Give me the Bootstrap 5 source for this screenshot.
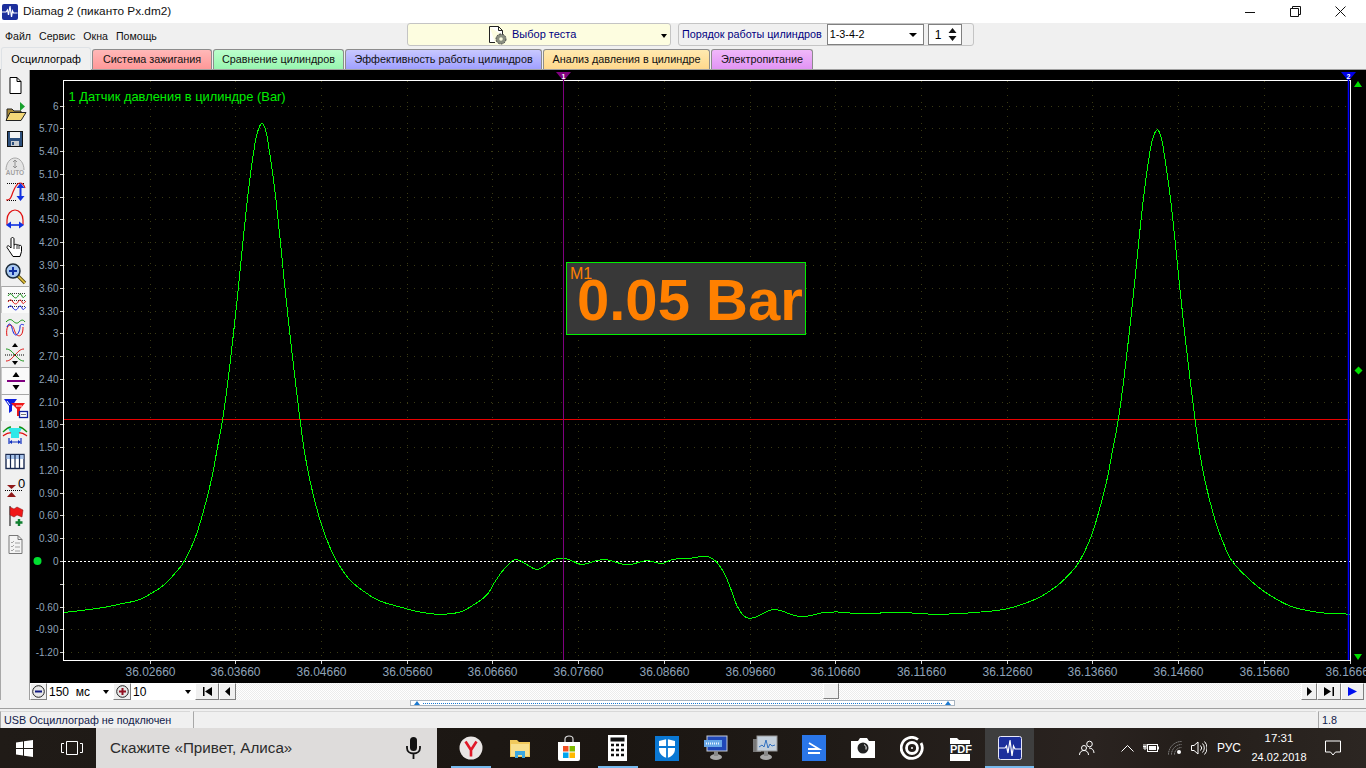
<!DOCTYPE html>
<html lang="ru">

<head>
    <meta charset="UTF-8">
    <title>Diamag 2</title>
    <link href="https://cdn.jsdelivr.net/npm/bootstrap@5.3.0/dist/css/bootstrap.min.css" rel="stylesheet">
    <style>
        html, body { height: 768px; overflow: hidden; }
        body { background: #f0f0f0; font-family: "Liberation Sans", Arial, sans-serif; font-size: 11px; color: #000; line-height: 1; }
        svg { display: block; }

        .win-title { height: 23px; background: #fff; font-size: 11.8px; color: #111; }
        .win-title .app-ico { margin: 0 5px 0 2px; }
        .win-btn { width: 45.5px; height: 23px; }
        .win-btns { margin-right: 2.5px; }

        .top-row { height: 24px; }
        .menu-area { width: 407px; padding-left: 5px; gap: 8px; font-size: 10.6px; color: #111; padding-top: 2px; }
        .test-pick { width: 264px; height: 23px; background: #fdfde0; border: 1px solid #c4c4c4; border-radius: 3px; color: #000080; position: relative; }
        .test-pick .doc-ico { margin-left: 80px; margin-right: 3px; }
        .pick-caret { width: 0; height: 0; border-left: 3px solid transparent; border-right: 3px solid transparent; border-top: 4px solid #000; }
        .test-pick .pick-caret { position: absolute; right: 3px; top: 10px; }
        .cyl-group { width: 296px; height: 23px; margin-left: 7px; border: 1px solid #c4c4c4; border-radius: 3px; color: #000080; padding-left: 3px; font-size: 10.8px; }
        .cyl-combo { width: 97px; height: 21px; margin-left: 5px; background: #fff; border: 1px solid #808080; color: #000; padding: 0 6px 0 2px; }
        .cyl-combo .pick-caret { border-left-width: 4px; border-right-width: 4px; }
        .cyl-spin { width: 34px; height: 21px; margin-left: 4px; background: #fff; border: 1px solid #808080; color: #000; padding: 0 4px 0 6px; font-size: 12px; }

        .tab-row.nav-tabs { height: 22px; border: 0; padding-left: 1px; gap: 1px; align-items: flex-end; flex-wrap: nowrap; }
        .tab-row .nav-link { height: 20px; margin: 0; padding: 0; display: flex; align-items: center; justify-content: center; color: #111; font-size: 10.8px; border: 1px solid #8c8c8c; border-bottom: 0; border-radius: 3px 3px 0 0; }
        .tab-row .nav-link.active { height: 23px; width: 90px; margin-bottom: -1px; background: #f0f0f0; color: #000; position: relative; z-index: 2; }
        .tab-row .tab-ign { width: 120px; background: linear-gradient(#ffb8b8, #ff9898); }
        .tab-row .tab-cmp { width: 131px; background: linear-gradient(#bcffcc, #98f5b0); }
        .tab-row .tab-eff { width: 197px; background: linear-gradient(#c8c8ff, #a0a0ff); }
        .tab-row .tab-prs { width: 167px; background: linear-gradient(#ffeab0, #ffd88c); }
        .tab-row .tab-pwr { width: 102px; background: linear-gradient(#f0b8fa, #e294f4); }

        .app-main { height: 631px; border-top: 1px solid #a0a0a0; border-left: 1px solid #a8a8a8; }
        .tool-col { width: 29px; border-right: 1px solid #a0a0a0; }
        .tool-btn { width: 28px; height: 27px; }
        .tool-btn.on { background: #fafafa; border-top: 1px solid #a8a8a8; border-left: 1px solid #c8c8c8; }
        .scope { width: 1336px; height: 613px; background: #000; }
        .scope-axis { font-family: "Liberation Sans", Arial, sans-serif; fill: #8fa3b8; }

        .ctrl-row { height: 17px; font-size: 12px; }
        .raised { height: 17px; background: #f0f0f0; border: 1px solid; border-color: #fff #808080 #808080 #fff; flex: none; display: flex; align-items: center; justify-content: center; }
        .ctrl-pick { background: #fff; height: 17px; padding: 0 4px 0 2px; flex: none; }
        .scroll-track { height: 17px; background: repeating-conic-gradient(#ececec 0% 25%, #fff 0% 50%) 0 0 / 2px 2px; position: relative; }
        .scroll-thumb { position: absolute; left: 587px; top: 0; width: 16px; height: 16px; background: #f0f0f0; border: 1px solid; border-color: #fff #808080 #808080 #fff; }

        .range-row { height: 8px; }
        .range-bar { width: 545px; height: 6px; margin: 0 0 0 410px; background: #fff; border: 1px solid #a8b4c0; }
        .range-dots { border-top: 1px dotted #1a78d0; height: 0; }
        .range-tri { width: 0; height: 0; border-left: 3px solid transparent; border-right: 3px solid transparent; border-bottom: 4px solid #1a78d0; margin: 0 3px; }

        .status-line { height: 20px; border-top: 1px solid #a0a0a0; padding-top: 2px; font-size: 10.8px; color: #10204a; }
        .stat-cell { height: 17px; border-left: 1px solid #a8a8a8; border-top: 1px solid #d8d8d8; padding: 3px 0 0 3px; }

        .task-bar { height: 40px; color: #fff; background: linear-gradient(90deg, #201b17 0, #1b1612 45%, #1f1a16 60%, #2a2320 80%, #241e1a 87%, #2c2622 100%); }
        .task-sys { width: 48px; height: 40px; }
        .task-search { width: 341px; height: 40px; background: #dedcdb; color: #2c2c2c; font-size: 15.2px; padding: 0 15px 0 14px; margin-right: 9px; }
        .task-app { width: 49px; height: 40px; position: relative; }
        .task-app.run::after { content: ""; position: absolute; left: 5px; right: 4px; bottom: 0; height: 2px; background: #76b9ed; }
        .task-app.cur { background: #3e3e3e; }
        .task-app.cur::after { content: ""; position: absolute; left: 0; right: 0; bottom: 0; height: 2px; background: #76b9ed; }
        .tray-ico { width: 24px; height: 40px; }
        .tray-lang { width: 36px; font-size: 12px; }
        .tray-clock { width: 64px; font-size: 11px; gap: 7px; }
        .tray-clock span:first-child { font-size: 11.5px; }
        .tray-note { width: 44px; height: 40px; margin-right: 11px; }
    </style>
</head>

<body>
    <div class="win-title d-flex align-items-center">
        <svg class="app-ico" width="16" height="16" viewBox="0 0 16 16"><rect width="16" height="16" rx="2" fill="#1c2f9c"/><path d="M0 8h4l1.500-2 1 5 1.500-9 1.500 11 1-6 1 2h4" fill="none" stroke="#fff" stroke-width="1.200"/></svg>
        <span>Diamag 2 (пиканто Px.dm2)</span>
        <div class="ms-auto d-flex win-btns">
            <div class="win-btn d-flex align-items-center justify-content-center"><svg width="10" height="10"><path d="M0 5.500h10" stroke="#111"/></svg></div>
            <div class="win-btn d-flex align-items-center justify-content-center"><svg width="11" height="11" viewBox="0 0 11 11"><path d="M.5 2.500h8v8h-8zM2.500 2.500v-2h8v8h-2" fill="none" stroke="#111"/></svg></div>
            <div class="win-btn d-flex align-items-center justify-content-center"><svg width="11" height="11" viewBox="0 0 11 11"><path d="M.5.500l10 10M10.500.500l-10 10" stroke="#111"/></svg></div>
        </div>
    </div>

    <div class="top-row d-flex">
        <div class="menu-area d-flex align-items-center">
            <span>Файл</span><span>Сервис</span><span>Окна</span><span>Помощь</span>
        </div>
        <div class="test-pick d-flex align-items-center">
            <svg class="doc-ico" width="21" height="20" viewBox="0 0 21 20">
                <path d="M1.500 1.500h9l4 4v5M7 17.500H1.500v-16M10.500 1.500v4h4" fill="#fff" stroke="#222"/>
                <circle cx="13" cy="14" r="5" fill="#8a8f80" stroke="#444" stroke-dasharray="2 1"/><circle cx="13" cy="14" r="1.800" fill="#fdfde0"/>
            </svg>
            <span>Выбор теста</span>
            <span class="pick-caret"></span>
        </div>
        <div class="cyl-group d-flex align-items-center">
            <span>Порядок работы цилиндров</span>
            <div class="cyl-combo d-flex align-items-center justify-content-between"><span>1-3-4-2</span><span class="pick-caret"></span></div>
            <div class="cyl-spin d-flex align-items-center justify-content-between">
                <span>1</span>
                <svg width="9" height="15" viewBox="0 0 9 15"><path d="M4.500 1l4 5h-8zM4.500 14l4-5h-8z" fill="#111"/></svg>
            </div>
        </div>
    </div>

    <ul class="nav nav-tabs tab-row">
        <li class="nav-item"><a class="nav-link active" href="#">Осциллограф</a></li>
        <li class="nav-item"><a class="nav-link tab-ign" href="#">Система зажигания</a></li>
        <li class="nav-item"><a class="nav-link tab-cmp" href="#">Сравнение цилиндров</a></li>
        <li class="nav-item"><a class="nav-link tab-eff" href="#">Эффективность работы цилиндров</a></li>
        <li class="nav-item"><a class="nav-link tab-prs" href="#">Анализ давления в цилиндре</a></li>
        <li class="nav-item"><a class="nav-link tab-pwr" href="#">Электропитание</a></li>
    </ul>

    <div class="app-main d-flex">
        <div class="tool-col d-flex flex-column">
            <div class="tool-btn d-flex align-items-center justify-content-center"><svg width="24" height="24" viewBox="0 0 24 24"><path d="M7 5.500h7l4 4v12H7zM14 5.500v4h4" fill="#fff" stroke="#000"/></svg></div>
            <div class="tool-btn d-flex align-items-center justify-content-center"><svg width="24" height="24" viewBox="0 0 24 24"><path d="M17 3l5 4.500-5 4.500z" fill="#16a02c"/><path d="M4 21V10h5l2 2h7v9z" fill="#a88a38" stroke="#222"/><path d="M3 21.500l4-8h16l-5 8z" fill="#f4d878" stroke="#222"/></svg></div>
            <div class="tool-btn d-flex align-items-center justify-content-center"><svg width="24" height="24" viewBox="0 0 24 24"><rect x="4.500" y="5.500" width="15" height="15" fill="#2c4f7c" stroke="#111"/><rect x="7" y="6" width="10" height="6" fill="#f4f4f4"/><rect x="8" y="15" width="8" height="5" fill="#c8ccd0"/><rect x="9" y="16" width="2" height="3" fill="#2c4f7c"/></svg></div>
            <div class="tool-btn d-flex align-items-center justify-content-center"><svg width="24" height="24" viewBox="0 0 24 24"><path d="M3 17c0-7 4-12 9-12s9 5 9 12" fill="#e4e4e4" stroke="#a8a8a8"/><path d="M12 7v8M10 9l2-2 2 2M10 13l2 2 2-2" fill="none" stroke="#909090"/><text x="12" y="22" font-size="6.500" font-weight="700" text-anchor="middle" fill="#a0a0a0" font-family="Liberation Sans">AUTO</text></svg></div>
            <div class="tool-btn d-flex align-items-center justify-content-center"><svg width="24" height="24" viewBox="0 0 24 24"><path d="M4 3.500h18M4 20.500h10" stroke="#000" stroke-dasharray="1 1"/><path d="M3 20c5 0 5-3 7-8s4-9 7-9 4 2 5 5" fill="none" stroke="#e01010" stroke-width="1.200"/><path d="M17.500 6v12" stroke="#1030e0" stroke-width="2"/><path d="M17.500 3l4 5h-8zM17.500 21l4-5h-8z" fill="#1030e0"/></svg></div>
            <div class="tool-btn d-flex align-items-center justify-content-center"><svg width="24" height="24" viewBox="0 0 24 24"><path d="M4 18v-5c0-6 4-10 8-10s8 4 8 10v5" fill="none" stroke="#e01010" stroke-width="1.200"/><path d="M6 18h12" stroke="#1030e0" stroke-width="1.600"/><path d="M3 18l5-3.500v7zM21 18l-5-3.500v7z" fill="#1030e0"/></svg></div>
            <div class="tool-btn d-flex align-items-center justify-content-center"><svg width="24" height="24" viewBox="0 0 24 24"><path d="M8 14V5c0-2 3-2 3 0v6l1-.5c1-.5 2 0 2 .5 1-.5 2 0 2 .5 1-.5 2.500 0 2.500 1v5l-1.500 5H10l-4-6-2-3c-.5-1.500 1.500-2.500 2.500-1z" fill="#fff" stroke="#000"/><path d="M11 11v4M14 11v4M16 11.500v3.500" stroke="#000" stroke-width=".8"/></svg></div>
            <div class="tool-btn d-flex align-items-center justify-content-center"><svg width="24" height="24" viewBox="0 0 24 24"><path d="M14 14l8 8" stroke="#5a4a10" stroke-width="3.400"/><path d="M15 15l7 7" stroke="#e8c840" stroke-width="1.600"/><circle cx="10" cy="10" r="7" fill="#a8c8f0" stroke="#1a2a3a" stroke-width="1.500"/><path d="M6 10h8M10 6v8" stroke="#1030a0" stroke-width="2"/></svg></div>
            <div class="tool-btn on d-flex align-items-center justify-content-center"><svg width="24" height="24" viewBox="0 0 24 24"><path d="M4 5.500h18M4 12.500h18M4 18.500h18" stroke="#000" stroke-dasharray="1 1" stroke-width=".8"/><path d="M4 8c2-3 3-3 5 0s4 2 5 0 3-3 4 0 2 1 4-1" fill="none" stroke="#109010"/><path d="M4 14c2-3 3-3 5 0s4 2 5 0 3-3 4 0 2 1 4-1" fill="none" stroke="#e01010"/><path d="M4 20c2-3 3-3 5 0s4 2 5 0 3-3 4 0 2 1 4-1" fill="none" stroke="#1020e0"/></svg></div>
            <div class="tool-btn d-flex align-items-center justify-content-center"><svg width="24" height="24" viewBox="0 0 24 24"><path d="M3 7c3-3 5-3 7-1s4 3 6 1 4-3 6 0" fill="none" stroke="#109010"/><path d="M4 21c-1-5 0-11 3-11s4 4 5 7 4 5 6 3 2-6 2-8" fill="none" stroke="#e01010"/><path d="M4 12c2-5 4-3 5 1s2 7 4 7 4-5 4-8 2-3 4-2" fill="none" stroke="#1020e0"/></svg></div>
            <div class="tool-btn d-flex align-items-center justify-content-center"><svg width="24" height="24" viewBox="0 0 24 24"><path d="M12 1l3 4H9z" fill="#000"/><path d="M3 7c4 0 6 3 9 6s5 6 9 6" fill="none" stroke="#109010"/><path d="M3 19c4 0 6-3 9-6s5-6 9-6" fill="none" stroke="#e01010"/><path d="M2 13h20" stroke="#000" stroke-dasharray="1 1"/><path d="M12 23l3-4H9z" fill="#000"/></svg></div>
            <div class="tool-btn on d-flex align-items-center justify-content-center"><svg width="24" height="24" viewBox="0 0 24 24"><path d="M12 3l3.500 5h-7zM12 21l3.500-5h-7z" fill="#000"/><path d="M3 12h18" stroke="#800080" stroke-width="2"/></svg></div>
            <div class="tool-btn on d-flex align-items-center justify-content-center"><svg width="26" height="24" viewBox="0 0 26 24"><path d="M1 3h13l-5 7v5l-3 2v-7z" fill="#1020e0"/><path d="M8 7h14l-5 6v7h-3v-7z" fill="#f01818"/><path d="M4 5l3 4M13 10h6" stroke="#fff"/><rect x="16.500" y="15.500" width="8" height="6" fill="#fff" stroke="#1020a0" stroke-width="1.300"/><path d="M18 18.500h5" stroke="#777"/></svg></div>
            <div class="tool-btn d-flex align-items-center justify-content-center"><svg width="26" height="24" viewBox="0 0 26 24"><path d="M6 5h14l-3 6v4H9v-4z" fill="#30e8e8"/><path d="M1 9c3-3 5-5 8-5M25 9c-3-3-5-5-8-5" fill="none" stroke="#109010" stroke-width="1.300"/><path d="M1 13c3-2 5-4 8-3M25 13c-3-2-5-4-8-3" fill="none" stroke="#e01010" stroke-width="1.300"/><path d="M7 15v6M19 15v6M9 19h8" stroke="#1030c0" stroke-width="1.200"/><path d="M7 19l3-2v4zM19 19l-3-2v4z" fill="#1030c0"/></svg></div>
            <div class="tool-btn d-flex align-items-center justify-content-center"><svg width="24" height="24" viewBox="0 0 24 24"><rect x="3" y="4.500" width="18" height="14" fill="#fff" stroke="#1a2a50" stroke-width="1.400"/><rect x="3.500" y="5" width="17" height="4" fill="#a8c4ec"/><path d="M7.500 5v14M12 5v14M16.500 5v14" stroke="#1a2a50" stroke-width="1.200"/></svg></div>
            <div class="tool-btn d-flex align-items-center justify-content-center"><svg width="24" height="24" viewBox="0 0 24 24"><path d="M4 8h9l-4.500 4zM4 20h9l-4.500-5z" fill="#901818"/><path d="M2 13.500h17" stroke="#000" stroke-dasharray="1 1"/><text x="18.500" y="11" font-size="13" text-anchor="middle" fill="#000" font-family="Liberation Sans">0</text></svg></div>
            <div class="tool-btn d-flex align-items-center justify-content-center"><svg width="24" height="24" viewBox="0 0 24 24"><path d="M7 2v20" stroke="#000"/><path d="M7 3l4 2 3-2 6 3-1 7-5-2-3 2-4-2z" fill="#f01818" stroke="#801010" stroke-width=".5"/><path d="M16 15v7M12.500 18.500h7" stroke="#108030" stroke-width="2.400"/></svg></div>
            <div class="tool-btn d-flex align-items-center justify-content-center"><svg width="24" height="24" viewBox="0 0 24 24"><path d="M6 4.500h9l4 4v14H6z" fill="#f4f4f4" stroke="#787878"/><path d="M15 4.500v4h4" fill="none" stroke="#787878"/><path d="M8 11l1 1 2-2M8 15l1 1 2-2M8 19l1 1 2-2M12 12h5M12 16h5M12 20h5" fill="none" stroke="#909090" stroke-width=".8"/></svg></div>
        </div>

        <div class="flex-grow-1 d-flex flex-column">
            <div class="scope">
                <svg id="scope_svg" width="1336" height="613" viewBox="30 70 1336 613">
                    <g id="scope_grid"></g>
                    <rect x="63.500" y="80.500" width="1287" height="580" fill="none" stroke="#fff"/>
                    <path d="M64 561.500h1286" stroke="#fff" stroke-dasharray="2 2"/>
                    <path d="M64 419.500h1286" stroke="#e80000"/>
                    <polyline id="scope_trace" fill="none" stroke="#00ff00" stroke-width="1" shape-rendering="crispEdges"/>
                    <path d="M563.500 78v582" stroke="#800080"/>
                    <path d="M556 72h15l-7.500 9z" fill="#800080"/>
                    <text x="563.500" y="78.500" font-size="7" font-weight="700" fill="#fff" text-anchor="middle" font-family="Liberation Sans">1</text>
                    <path d="M1348.500 78v582" stroke="#0000ff" stroke-width="1.500"/>
                    <path d="M1341 72h15l-7.500 9z" fill="#0000e8"/>
                    <text x="1348.500" y="78.500" font-size="7" font-weight="700" fill="#fff" text-anchor="middle" font-family="Liberation Sans">2</text>
                    <path d="M1354 87l4-6 4 6zM1354 654l4 6 4-6z" fill="#00e000"/>
                    <path d="M1358.500 366.500l4 4-4 4-4-4z" fill="#00e000"/>
                    <circle cx="37.500" cy="561" r="4" fill="#00e030"/>
                    <text x="68.500" y="101" font-size="12.900" fill="#00ef00" font-family="Liberation Sans">1 Датчик давления в цилиндре (Bar)</text>
                    <rect x="566.500" y="262.500" width="239" height="72" fill="#383838" stroke="#00f000"/>
                    <text x="570" y="279" font-size="16" fill="#ff8000" font-family="Liberation Sans">M1</text>
                    <text x="577" y="320" font-size="58" font-weight="700" fill="#ff8000" font-family="Liberation Sans">0.05 Bar</text>
                </svg>
            </div>
            <div class="ctrl-row d-flex">
                <div class="raised" style="width:17px"><svg width="13" height="13" viewBox="0 0 13 13"><circle cx="6.500" cy="6.500" r="5.800" fill="#e8e8e8" stroke="#222"/><path d="M3 6.500h7" stroke="#101880" stroke-width="2"/></svg></div>
                <div class="ctrl-pick d-flex align-items-center justify-content-between" style="width:66px"><span>150&nbsp; мс</span><span class="pick-caret"></span></div>
                <div class="raised ms-0" style="width:18px;margin-left:2px"><svg width="13" height="13" viewBox="0 0 13 13"><circle cx="6.500" cy="6.500" r="5.800" fill="#e8e8e8" stroke="#222"/><path d="M3 6.500h7M6.500 3v7" stroke="#901020" stroke-width="2"/></svg></div>
                <div class="ctrl-pick d-flex align-items-center justify-content-between" style="width:64px"><span>10</span><span class="pick-caret"></span></div>
                <div class="raised" style="width:24px"><svg width="11" height="9"><path d="M1 0h1.500v9H1zM10 0v9L3 4.500z" fill="#000"/></svg></div>
                <div class="raised" style="width:17px"><svg width="5" height="9"><path d="M5 0v9L0 4.500z" fill="#000"/></svg></div>
                <div class="scroll-track flex-grow-1"><div class="scroll-thumb"></div></div>
                <div class="raised" style="width:16px"><svg width="5" height="9"><path d="M0 0v9l5-4.500z" fill="#000"/></svg></div>
                <div class="raised" style="width:24px"><svg width="11" height="9"><path d="M0 0v9l7-4.500zM8.500 0H10v9H8.500z" fill="#000"/></svg></div>
                <div class="raised" style="width:23px;margin-right:2px"><svg width="9" height="9"><path d="M0 0v9l9-4.500z" fill="#0010f0"/></svg></div>
            </div>
        </div>
    </div>

    <div class="range-row">
        <div class="range-bar d-flex align-items-center">
            <span class="range-tri"></span><span class="range-dots flex-grow-1"></span><span class="range-tri"></span>
        </div>
    </div>

    <div class="status-line d-flex">
        <div class="stat-cell" style="width:190px">USB Осциллограф не подключен</div>
        <div class="stat-cell" style="width:1123px;margin-left:3px"></div>
        <div class="stat-cell flex-grow-1" style="margin-left:2px">1.8</div>
    </div>

    <div class="task-bar d-flex align-items-center">
        <div class="task-sys d-flex align-items-center justify-content-center"><svg width="17" height="17" viewBox="0 0 17 17"><path d="M0 2.500l7-1v6.500H0zM8 1.300L17 0v8H8zM0 9h7v6.500l-7-1zM8 9h9v8l-9-1.300z" fill="#fff"/></svg></div>
        <div class="task-sys d-flex align-items-center justify-content-center"><svg width="22" height="14" viewBox="0 0 22 14"><path d="M5.500.500h11v13h-11zM3 2.500H.5v9H3M19 2.500h2.500v9H19" fill="none" stroke="#fff"/></svg></div>
        <div class="task-search d-flex align-items-center justify-content-between">
            <span>Скажите «Привет, Алиса»</span>
            <svg width="17" height="22" viewBox="0 0 17 22"><rect x="5" y="0" width="7" height="14" rx="3.500" fill="#111"/><path d="M2 9v2c0 3.500 3 5.500 6.500 5.500S15 14.500 15 11V9M8.500 16.500V22" fill="none" stroke="#111" stroke-width="1.800"/></svg>
        </div>

        <div class="task-app run d-flex align-items-center justify-content-center"><svg width="24" height="24" viewBox="0 0 24 24"><circle cx="12" cy="12" r="11.500" fill="#e9e5e4"/><path d="M6.500 5.500L12 14l5.500-8.500M12 14v6.500" fill="none" stroke="#e01828" stroke-width="2.600"/></svg></div>
        <div class="task-app d-flex align-items-center justify-content-center"><svg width="24" height="24" viewBox="0 0 24 24"><path d="M2 4h7l2 2h11v15H2z" fill="#f0c95c"/><path d="M3 8h18v12H3z" fill="#f8e08e"/><path d="M7 22v-7h10v7h-3v-3h-4v3z" fill="#3ca8e0"/></svg></div>
        <div class="task-app d-flex align-items-center justify-content-center"><svg width="24" height="26" viewBox="0 0 24 26"><path d="M8 8V4c0-4 8-4 8 0v4" fill="none" stroke="#ddd" stroke-width="1.200"/><path d="M1 7h22v17a2 2 0 0 1-2 2H3a2 2 0 0 1-2-2z" fill="#fff"/><rect x="6" y="11" width="5.500" height="5.500" fill="#f25022"/><rect x="12.500" y="11" width="5.500" height="5.500" fill="#7fba00"/><rect x="6" y="17.500" width="5.500" height="5.500" fill="#00a4ef"/><rect x="12.500" y="17.500" width="5.500" height="5.500" fill="#ffb900"/></svg></div>
        <div class="task-app run d-flex align-items-center justify-content-center"><svg width="19" height="26" viewBox="0 0 19 26"><rect width="19" height="26" fill="#fff"/><rect x="2.500" y="2.500" width="14" height="4" fill="#111"/><path d="M3 10h3M8 10h3M13 10h3M3 15h3M8 15h3M13 15h3M3 20h3M8 20h3M13 20h3" stroke="#111" stroke-width="2.400"/></svg></div>
        <div class="task-app d-flex align-items-center justify-content-center"><svg width="24" height="25" viewBox="0 0 24 25"><rect width="24" height="25" fill="#0a78d4"/><path d="M4 5l8-2 8 2v8c0 5-4 8-8 9-4-1-8-4-8-9z" fill="#fff"/><path d="M12 3v19M4 11h16" stroke="#0a78d4" stroke-width="1.800"/></svg></div>
        <div class="task-app d-flex align-items-center justify-content-center"><svg width="26" height="26" viewBox="0 0 26 26"><rect x="4" y="1" width="20" height="15" fill="#2048b8" stroke="#c8ccd4"/><rect x="1" y="5" width="18" height="7" fill="#68a8e8"/><path d="M3 8.500h14" stroke="#e8f4ff" stroke-width="2" stroke-dasharray="1 1"/><ellipse cx="13" cy="22" rx="6" ry="3" fill="#a8a8a8"/><rect x="11" y="16" width="4" height="5" fill="#888"/></svg></div>
        <div class="task-app d-flex align-items-center justify-content-center"><svg width="26" height="26" viewBox="0 0 26 26"><rect x="1" y="4" width="8" height="13" fill="#777"/><rect x="5" y="1" width="20" height="15" fill="#c4d0dc" stroke="#999"/><path d="M7 12l3-2 2 2 2-7 2 8 2-4 2 2 3-1" fill="none" stroke="#3070c0"/><ellipse cx="14" cy="22" rx="6" ry="3" fill="#a8a8a8"/><rect x="12" y="16" width="4" height="5" fill="#888"/></svg></div>
        <div class="task-app d-flex align-items-center justify-content-center"><svg width="24" height="26" viewBox="0 0 24 26"><rect width="24" height="26" fill="#2a76e8"/><path d="M7 8l10 6H6M6 18h12" fill="none" stroke="#fff" stroke-width="1.800"/></svg></div>
        <div class="task-app d-flex align-items-center justify-content-center"><svg width="24" height="20" viewBox="0 0 24 20"><path d="M0 3h7l2-3h7l2 3h6v17H0z" fill="#fff"/><circle cx="12" cy="10" r="5.500" fill="#222"/><path d="M13 6.500a4 4 0 0 1 2 5" fill="none" stroke="#fff"/></svg></div>
        <div class="task-app d-flex align-items-center justify-content-center"><svg width="24" height="24" viewBox="0 0 24 24"><path d="M18 3.500A10.500 10.500 0 1 0 21 7" fill="none" stroke="#fff" stroke-width="2.800"/><circle cx="12" cy="12" r="5.500" fill="none" stroke="#fff" stroke-width="2.800"/><circle cx="12" cy="12" r="1" fill="#fff"/></svg></div>
        <div class="task-app d-flex align-items-center justify-content-center"><svg width="24" height="26" viewBox="0 0 24 26"><path d="M1 3h7l2 2h11v21H1z" fill="#fff"/><rect x="0" y="9" width="24" height="10" fill="#222"/><text x="12" y="18" font-size="11" font-weight="700" text-anchor="middle" fill="#fff" font-family="Liberation Sans">PDF</text></svg></div>
        <div class="task-app cur d-flex align-items-center justify-content-center"><svg width="24" height="24" viewBox="0 0 24 24"><rect x=".5" y=".5" width="23" height="23" rx="2" fill="#1c2f9c" stroke="#e8e8f8"/><path d="M1 12h6l1.500-2 1.500 7 2-13 2 16 1.500-10 1.500 3h6" fill="none" stroke="#fff" stroke-width="1.200"/></svg></div>

        <div class="ms-auto d-flex align-items-center">
            <div class="tray-ico d-flex align-items-center justify-content-center me-3"><svg width="16" height="16" viewBox="0 0 16 16"><circle cx="10.500" cy="4" r="2.800" fill="none" stroke="#fff"/><circle cx="5" cy="8" r="2.500" fill="none" stroke="#fff"/><path d="M.5 15c0-3 2-4.500 4.500-4.500S9.500 12 9.500 15M10 8c3 0 5 2 5 5" fill="none" stroke="#fff"/></svg></div>
            <div class="tray-ico d-flex align-items-center justify-content-center"><svg width="13" height="8" viewBox="0 0 13 8"><path d="M.5 7.500l6-6 6 6" fill="none" stroke="#fff"/></svg></div>
            <div class="tray-ico d-flex align-items-center justify-content-center"><svg width="16" height="10" viewBox="0 0 16 10"><rect x="4.500" y="1.500" width="10" height="7" fill="none" stroke="#fff"/><rect x="6" y="3" width="7" height="4" fill="#fff"/><path d="M0 3.500h3M1 1v3M3 1v3M1 4h2v2H1z" stroke="#fff"/><rect x="15" y="3.500" width="1" height="3" fill="#fff"/></svg></div>
            <div class="tray-ico d-flex align-items-center justify-content-center"><svg width="14" height="14" viewBox="0 0 14 14"><path d="M.5 13.500A13 13 0 0 1 13.500.5M3.500 13.500a10 10 0 0 1 10-10M6.500 13.500a7 7 0 0 1 7-7" fill="none" stroke="#8a8a8a" stroke-dasharray="1.500 .6"/><circle cx="11" cy="11" r="2" fill="#fff"/></svg></div>
            <div class="tray-ico d-flex align-items-center justify-content-center"><svg width="16" height="14" viewBox="0 0 16 14"><path d="M.5 4.500h2.500L7 1v12L3 9.500H.5z" fill="none" stroke="#fff"/><path d="M9.500 4.500a3.500 3.500 0 0 1 0 5M11.500 2.500a6.500 6.500 0 0 1 0 9M13.500.5a9.500 9.500 0 0 1 0 13" fill="none" stroke="#fff"/></svg></div>
            <div class="tray-lang text-center">РУС</div>
            <div class="tray-clock d-flex flex-column align-items-center"><span>17:31</span><span>24.02.2018</span></div>
            <div class="tray-note d-flex align-items-center justify-content-center"><svg width="16" height="16" viewBox="0 0 16 16"><path d="M.5 1h15v11h-5l-2.500 3-2.500-3H.5z" fill="none" stroke="#fff"/></svg></div>
        </div>
    </div>

    <script src="https://cdn.jsdelivr.net/npm/bootstrap@5.3.0/dist/js/bootstrap.bundle.min.js"></script>
    <script>
        const NS = 'http://www.w3.org/2000/svg';
        const firstPeak = [[64,612.5],[100,608],[125,603],[140,599.3],[161.7,586.7],[175,573.3],[184.3,561],[195,538.3],[203.3,511.7],[211.7,478.3],[217.3,448.3],[222.7,419.3],[228.3,378.3],[233.3,335],[238.3,288.3],[243.3,238.3],[248.3,191.7],[252.7,158.3],[256.7,135],[261.7,123.3],[266,131.7],[270,155],[275,191.7],[280,238.3],[285,288.3],[290,335],[295,378.3],[300,419.3],[305,455],[311.7,488.3],[320,520],[328.3,543.3],[336.7,561],[350,580],[366.7,593.3],[380,601]];
        const middle = [[400,607],[420,612],[440,614.3],[460,612],[473.3,605],[486.7,595],[495,581.7],[503.3,570],[513.3,560.3],[520,560.7],[533.3,568.3],[540,568.7],[553.3,560],[563.3,558.3],[570,560],[581.7,564.3],[596.7,560.7],[606.7,559.7],[623.3,564.3],[631.7,564.3],[646.7,560.7],[661.7,563.3],[673.3,559.3],[690,558.3],[705,556.3],[715,560.7],[723.3,571.7],[730,586.7],[736.7,605],[745,616.7],[755,617.3],[770,610.3],[780,610.3],[790,614],[803.3,616.7],[823.3,612.7],[840,612],[860,613.5],[900,612.5],[930,614],[960,613.5],[1000,610],[1020,605],[1040,597],[1058,585]];
        const lastTail = [[1250,580],[1268,594],[1290,606],[1310,611],[1330,613.5],[1350,614]];

        function add_el(parent, tag, attrs, text) {
            let el = document.createElementNS(NS, tag);
            for (let key in attrs) el.setAttribute(key, attrs[key]);
            if (text) el.textContent = text;
            parent.appendChild(el);
        }

        function draw_grid() {
            let grid = document.getElementById('scope_grid');
            for (let i = 0; i <= 24; i++) {
                let v = 6 - i * 0.3;
                let y = Math.round(561 - v * 75.9) + 0.5;
                add_el(grid, 'path', {d: 'M64 ' + y + 'h1286', stroke: '#3a3a14', 'stroke-dasharray': '1 6', 'shape-rendering': 'crispEdges'});
                add_el(grid, 'path', {d: 'M60 ' + y + 'h4', stroke: '#cfcfcf'});
                if (i === 21) continue;
                let label = Math.abs(v - Math.round(v)) < 0.01 ? String(Math.round(v)) : v.toFixed(2);
                add_el(grid, 'text', {x: 58.5, y: y + 3.5, 'font-size': 10, 'text-anchor': 'end', class: 'scope-axis'}, label);
            }
            for (let i = 0; i <= 14; i++) {
                let x = Math.round(149.5 + i * 85.72) + 0.5;
                add_el(grid, 'path', {d: 'M' + x + ' 81V660', stroke: '#3a3a14', 'stroke-dasharray': '1 6', 'shape-rendering': 'crispEdges'});
                add_el(grid, 'path', {d: 'M' + x + ' 660v4', stroke: '#cfcfcf'});
                add_el(grid, 'text', {x: x, y: 676, 'font-size': 12, 'text-anchor': 'middle', class: 'scope-axis'}, (36.0266 + i * 0.01).toFixed(5));
            }
        }

        // catmull-rom through the read points, one sample per pixel or so
        function smooth(pts) {
            let out = [];
            for (let i = 0; i < pts.length - 1; i++) {
                let p0 = pts[Math.max(i - 1, 0)], p1 = pts[i], p2 = pts[i + 1], p3 = pts[Math.min(i + 2, pts.length - 1)];
                let steps = Math.ceil(p2[0] - p1[0]);
                for (let s = 0; s < steps; s++) {
                    let t = s / steps, t2 = t * t, t3 = t2 * t;
                    let c = k => 0.5 * (2 * p1[k] + (p2[k] - p0[k]) * t + (2 * p0[k] - 5 * p1[k] + 4 * p2[k] - p3[k]) * t2 + (3 * p1[k] - p0[k] - 3 * p2[k] + p3[k]) * t3);
                    out.push([c(0).toFixed(1), c(1).toFixed(1)]);
                }
            }
            out.push(pts[pts.length - 1]);
            return out;
        }

        function draw_trace() {
            let second = firstPeak.slice(5, 33).map(p => [p[0] + 895.3, 561 - (561 - p[1]) * 0.985]);
            let pts = smooth(firstPeak.concat(middle, second, lastTail));
            document.getElementById('scope_trace').setAttribute('points', pts.map(p => p.join(',')).join(' '));
        }

        draw_grid();
        draw_trace();
    </script>
</body>

</html>
